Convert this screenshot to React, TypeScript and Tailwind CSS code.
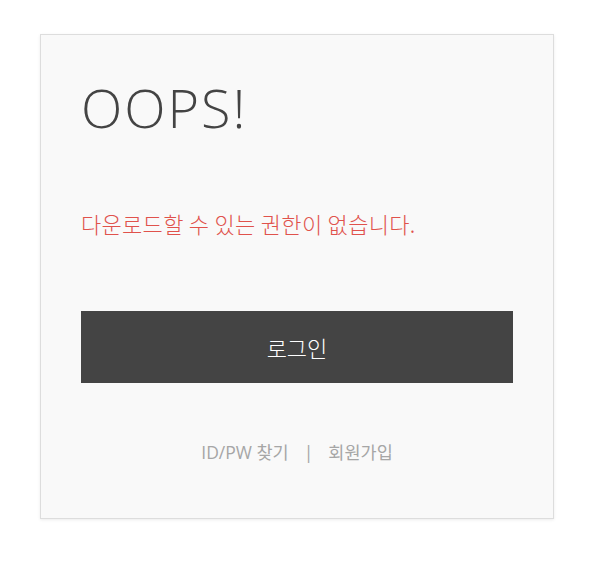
import React from "react";

export default function App() {
  return (
    <div className="w-[590px] h-[570px] bg-white pt-[34px] pl-[40px] font-['Open_Sans','Noto_Sans_CJK_KR',sans-serif]">
      <div className="w-[514px] h-[485px] border border-[#dddddd] bg-[#f9f9f9] shadow-[0_1px_3px_rgba(0,0,0,0.08)] px-[40px] pt-[36px]">
        <h1 className="text-[54px] leading-[72px] font-light text-[#444444] tracking-[2px]">OOPS!</h1>
        <p className="mt-[66px] text-[22px] leading-[28px] font-light tracking-[0.3px] text-[#e0524c] font-['Noto_Sans_CJK_KR',sans-serif]">
          다운로드할 수 있는 권한이 없습니다.
        </p>
        <button className="mt-[74px] w-[432px] h-[72px] bg-[#444444] text-white text-[22px] font-light flex items-center justify-center font-['Noto_Sans_CJK_KR',sans-serif]">
          로그인
        </button>
        <div className="mt-[57px] flex justify-center items-center text-[#a6a6a6] text-[17.5px] leading-[24px]">
          <span>ID/PW 찾기</span>
          <span className="mx-[15px]">|</span>
          <span>회원가입</span>
        </div>
      </div>
    </div>
  );
}
